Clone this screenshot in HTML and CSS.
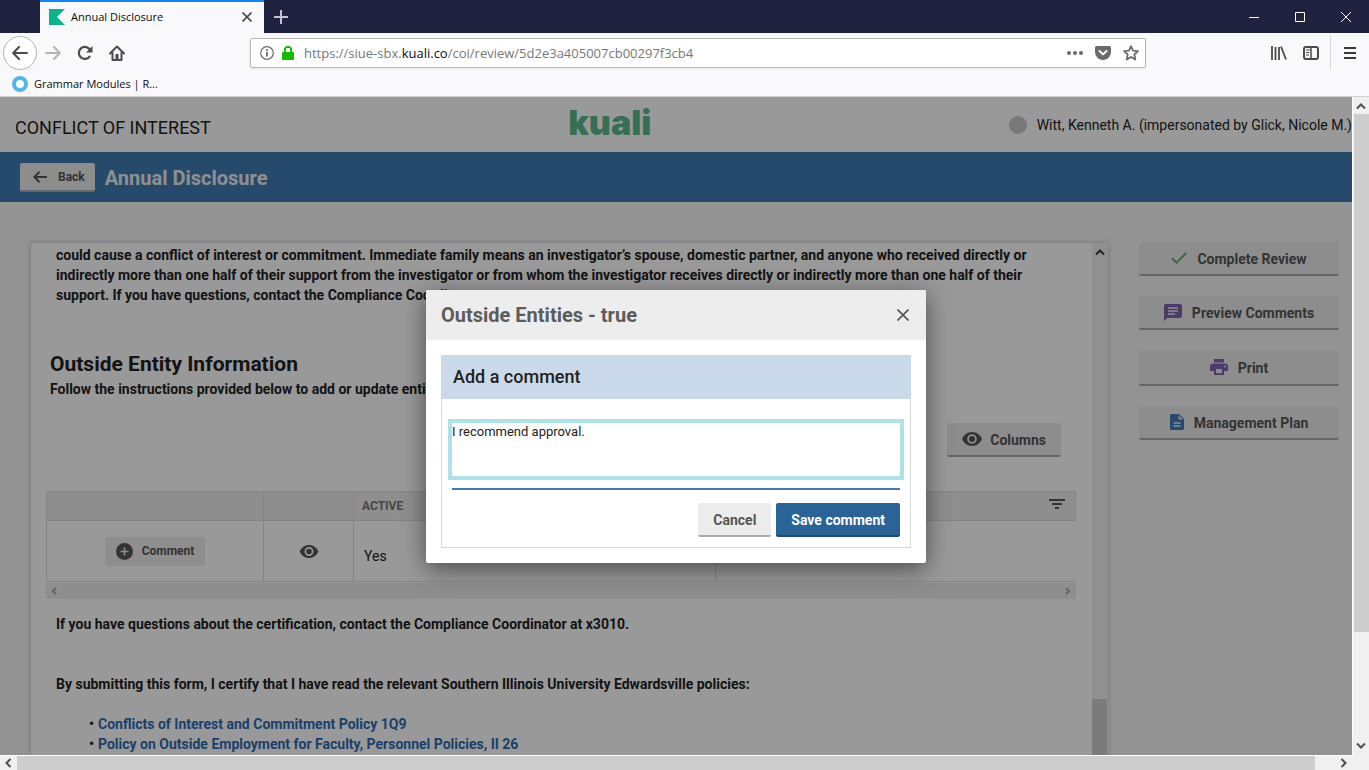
FILE: index.html
```html
<!DOCTYPE html>
<html lang="en">
<head>
<meta charset="utf-8">
<title>Annual Disclosure</title>
<link rel="stylesheet" href="styles.css">
</head>
<body>
<div class="tabbar">
  <div class="tab">
    <svg class="favicon" width="16" height="16" viewBox="0 0 16 16"><path d="M0 0h16l-8 8 8 8H0z" fill="#0db48a"/></svg>
    <span class="tab-title">Annual Disclosure</span>
    <button class="bare" aria-label="Close tab"><svg width="10" height="10" viewBox="0 0 10 10"><path d="M0.5 0.5l9 9M9.500.5l-9 9" stroke="#4a4a4f" stroke-width="1.600"/></svg></button>
  </div>
  <button class="bare new-tab" aria-label="New tab"><svg width="14" height="14" viewBox="0 0 14 14"><path d="M7 0v14M0 7h14" stroke="#c3c4cf" stroke-width="2"/></svg></button>
  <div class="window-buttons">
    <button class="bare" aria-label="Minimize"><svg width="10" height="10"><path d="M0 5.500h10" stroke="#fff"/></svg></button>
    <button class="bare" aria-label="Maximize"><svg width="10" height="10"><path d="M.5.5h9v9h-9z" fill="none" stroke="#fff"/></svg></button>
    <button class="bare" aria-label="Close"><svg width="10" height="10"><path d="M0 0l10 10M10 0L0 10" stroke="#fff"/></svg></button>
  </div>
</div>
<div class="toolbar">
  <div class="nav">
    <button class="bare back-circle" aria-label="Go back"><svg width="16" height="14" viewBox="0 0 16 14"><path d="M15 7H1.500M7 1L1.200 7 7 13" fill="none" stroke="#4a4a4f" stroke-width="2" stroke-linecap="round" stroke-linejoin="round"/></svg></button>
    <button class="bare" aria-label="Go forward"><svg width="16" height="14" viewBox="0 0 16 14"><path d="M1 7h13.500M9 1l5.800 6L9 13" fill="none" stroke="#b4b4b8" stroke-width="2" stroke-linecap="round" stroke-linejoin="round"/></svg></button>
    <button class="bare" aria-label="Reload"><svg width="16" height="16" viewBox="0 0 16 16"><path d="M12.600 11.600A6 6 0 1 1 12.400 4" fill="none" stroke="#4a4a4f" stroke-width="2.200" stroke-linecap="round"/><path d="M15.500 1v6.500H9z" fill="#4a4a4f"/></svg></button>
    <button class="bare" aria-label="Home"><svg width="16" height="16" viewBox="0 0 16 16"><path d="M1 8.500L8 1.500l7 7M3.500 8v7h9V8" fill="none" stroke="#4a4a4f" stroke-width="2" stroke-linecap="round" stroke-linejoin="round"/><path d="M6.500 9h3v6h-3z" fill="#4a4a4f"/></svg></button>
  </div>
  <div class="urlbar">
    <svg width="14" height="14" viewBox="0 0 14 14"><circle cx="7" cy="7" r="6.300" fill="none" stroke="#6a6a6e" stroke-width="1.200"/><path d="M7 6v4.500M7 3.200v1.700" stroke="#6a6a6e" stroke-width="1.800"/></svg>
    <svg width="12" height="14" viewBox="0 0 12 14"><rect y="6" width="12" height="8" rx="1" fill="#12bc00"/><path d="M2.800 7V4a3.200 3.200 0 0 1 6.400 0v3" fill="none" stroke="#12bc00" stroke-width="2"/></svg>
    <div class="url">https://siue-sbx.<b>kuali.co</b>/coi/review/5d2e3a405007cb00297f3cb4</div>
    <svg width="16" height="4"><g fill="#6a6a6e"><circle cx="2" cy="2" r="2"/><circle cx="8" cy="2" r="2"/><circle cx="14" cy="2" r="2"/></g></svg>
    <svg width="16" height="14" viewBox="0 0 16 14"><path d="M1.500 0h13A1.500 1.500 0 0 1 16 1.500V6a8 8 0 0 1-16 0V1.500A1.500 1.500 0 0 1 1.500 0z" fill="#6a6a6e"/><path d="M4.500 5L8 8.400 11.500 5" fill="none" stroke="#fff" stroke-width="2" stroke-linecap="round" stroke-linejoin="round"/></svg>
    <svg width="16" height="16" viewBox="0 0 16 16"><path d="M8 1.200l2 4.500 5 .5-3.700 3.300 1 5L8 12l-4.300 2.500 1-5L1 6.200l5-.5z" fill="none" stroke="#6a6a6e" stroke-width="1.800" stroke-linejoin="round"/></svg>
  </div>
  <div class="tools">
    <button class="bare" aria-label="Library"><svg width="16" height="14" viewBox="0 0 16 14"><path d="M1 0v14M4.500 1v13M8 1v13M10 .5L15 13.500" fill="none" stroke="#4a4a4f" stroke-width="1.800"/></svg></button>
    <button class="bare" aria-label="Sidebars"><svg width="16" height="14" viewBox="0 0 16 14"><rect x="1" y="1" width="14" height="12" rx="2" fill="none" stroke="#4a4a4f" stroke-width="2"/><path d="M8 1v12" stroke="#4a4a4f" stroke-width="1.500"/><path d="M3 4h4M3 6.500h3M3 9h3" stroke="#4a4a4f"/></svg></button>
    <button class="bare menu" aria-label="Open menu"><svg width="12" height="12"><path d="M0 1h12M0 6h12M0 11h12" stroke="#38383d" stroke-width="2"/></svg></button>
  </div>
</div>
<div class="bookmarks">
  <svg width="16" height="16"><circle cx="8" cy="8" r="6" fill="#fff" stroke="#52b6ec" stroke-width="4"/></svg>
  <span>Grammar Modules | R...</span>
</div>

<div class="viewport">
  <div class="page">
    <header class="app-header">
      <div class="app-name">CONFLICT OF INTEREST</div>
      <div class="logo">kuali</div>
      <div class="user"><span class="avatar"></span>Witt, Kenneth A. (impersonated by Glick, Nicole M.)</div>
    </header>
    <div class="title-bar">
      <button class="btn back"><svg width="14" height="12" viewBox="0 0 14 12"><path d="M14 6H1.500M6.500 .8L1.300 6l5.200 5.200" fill="none" stroke="#555" stroke-width="2"/></svg>Back</button>
      <h1>Annual Disclosure</h1>
    </div>
    <div class="columns">
      <main class="panel">
        <div class="panel-content">
          <p class="indent">could cause a conflict of interest or commitment. Immediate family means an investigator’s spouse, domestic partner, and anyone who received directly or<br>indirectly more than one half of their support from the investigator or from whom the investigator receives directly or indirectly more than one half of their<br>support. If you have questions, contact the Compliance Coordinator.</p>
          <section class="entity">
            <h2>Outside Entity Information</h2>
            <p>Follow the instructions provided below to add or update entities.</p>
          </section>
          <div class="table-tools">
            <button class="btn"><svg width="20" height="14" viewBox="0 0 20 14"><path d="M10 0C5.500 0 1.700 2.800 0 7c1.700 4.200 5.500 7 10 7s8.300-2.800 10-7c-1.700-4.200-5.500-7-10-7z" fill="#555"/><circle cx="10" cy="7" r="3.900" fill="none" stroke="#ececec" stroke-width="1.800"/></svg>Columns</button>
          </div>
          <table class="grid">
            <colgroup><col class="c1"><col class="c2"><col class="c3"><col class="c4"></colgroup>
            <thead><tr><th></th><th></th><th>ACTIVE</th><th class="last"><svg width="16" height="10"><path d="M0 1h16M3 5h10M6 9h4" stroke="#555" stroke-width="2"/></svg></th></tr></thead>
            <tbody><tr>
              <td class="center"><button class="comment"><svg width="17" height="17" viewBox="0 0 17 17"><circle cx="8.500" cy="8.500" r="8.500" fill="#555"/><path d="M8.500 4.500v8M4.500 8.500h8" stroke="#eee" stroke-width="1.700"/></svg>Comment</button></td>
              <td class="center"><button class="bare" aria-label="View"><svg width="20" height="13" viewBox="0 0 20 14"><path d="M10 0C5.500 0 1.700 2.800 0 7c1.700 4.200 5.500 7 10 7s8.300-2.800 10-7c-1.700-4.200-5.500-7-10-7z" fill="#555"/><circle cx="10" cy="7" r="3.900" fill="none" stroke="#fff" stroke-width="1.800"/></svg></button></td>
              <td class="value">Yes</td><td></td>
            </tr></tbody>
          </table>
          <div class="table-scroll"><svg width="6" height="8"><path d="M5 1L2 4l3 3" fill="none" stroke="#a8a8a8" stroke-width="2"/></svg><svg width="6" height="8"><path d="M1 1l3 3-3 3" fill="none" stroke="#a8a8a8" stroke-width="2"/></svg></div>
          <p class="indent">If you have questions about the certification, contact the Compliance Coordinator at x3010.</p>
          <p class="indent certify">By submitting this form, I certify that I have read the relevant Southern Illinois University Edwardsville policies:</p>
          <ul class="policies">
            <li><a href="#">Conflicts of Interest and Commitment Policy 1Q9</a></li>
            <li><a href="#">Policy on Outside Employment for Faculty, Personnel Policies, II 26</a></li>
          </ul>
        </div>
        <div class="panel-scroll"><svg width="10" height="8"><path d="M1 6.500l4-4 4 4" fill="none" stroke="#444" stroke-width="2.200"/></svg><div class="panel-thumb"></div></div>
      </main>
      <aside class="actions">
        <button class="btn"><svg width="16" height="12" viewBox="0 0 16 12"><path d="M.8 6l4.700 4.700L15.200 1" fill="none" stroke="#67b165" stroke-width="2"/></svg>Complete Review</button>
        <button class="btn"><svg width="18" height="17" viewBox="0 0 18 17"><path d="M2 0h14a2 2 0 0 1 2 2v10a2 2 0 0 1-2 2H3.500L0 17V2a2 2 0 0 1 2-2z" fill="#7e62b3"/><path d="M4 4h10M4 7h10M4 10h7" stroke="#ececec" stroke-width="1.500"/></svg>Preview Comments</button>
        <button class="btn print"><svg width="18" height="16" viewBox="0 0 18 16"><path d="M4 0h10v3.500H4zM3 4.500h12a3 3 0 0 1 3 3V12h-4v4H4v-4H0V7.500a3 3 0 0 1 3-3z" fill="#7e62b3"/><path d="M6 10h6v4.200H6z" fill="#ececec"/><circle cx="15" cy="7.500" r="1" fill="#ececec"/></svg>Print</button>
        <button class="btn"><svg width="14" height="16" viewBox="0 0 14 16"><path d="M1.500 0H9l5 5v9.500a1.500 1.500 0 0 1-1.500 1.500h-11A1.500 1.500 0 0 1 0 14.500v-13A1.500 1.500 0 0 1 1.500 0z" fill="#3f7cb6"/><path d="M8.500 1.200v4.300H13z" fill="#ececec"/><path d="M3.500 9h7M3.500 12h7" stroke="#ececec" stroke-width="1.600"/></svg>Management Plan</button>
      </aside>
    </div>

    <div class="overlay">
      <div class="modal" role="dialog" aria-labelledby="modal-title">
        <div class="modal-header">
          <h2 id="modal-title">Outside Entities - true</h2>
          <button class="bare" aria-label="Close dialog"><svg width="12" height="12"><path d="M.5.5l11 11M11.500.5l-11 11" stroke="#555" stroke-width="1.700"/></svg></button>
        </div>
        <div class="modal-body">
          <form class="card">
            <label class="card-title" for="comment">Add a comment</label>
            <div class="card-body">
              <textarea id="comment">I recommend approval.</textarea>
              <div class="underline"></div>
              <div class="form-buttons">
                <button type="button" class="btn cancel">Cancel</button>
                <button type="button" class="btn save">Save comment</button>
              </div>
            </div>
          </form>
        </div>
      </div>
    </div>
  </div>
  <div class="vscroll">
    <svg width="10" height="8"><path d="M1 6.500l4-4 4 4" fill="none" stroke="#505050" stroke-width="2"/></svg>
    <div class="vthumb"></div>
    <svg class="end" width="10" height="8"><path d="M1 1.500l4 4 4-4" fill="none" stroke="#505050" stroke-width="2"/></svg>
  </div>
  <div class="hscroll">
    <svg width="8" height="10"><path d="M6.500 1l-4 4 4 4" fill="none" stroke="#505050" stroke-width="2"/></svg>
    <div class="hthumb"></div>
    <svg width="8" height="10"><path d="M1.500 1l4 4-4 4" fill="none" stroke="#505050" stroke-width="2"/></svg>
  </div>
  <div class="corner"></div>
</div>
</body>
</html>
```
FILE: styles.css
```css
* { box-sizing: border-box; }
body {
  margin: 0;
  height: 100vh;
  display: flex;
  flex-direction: column;
  overflow: hidden;
  font-family: Roboto, "Liberation Sans", sans-serif;
  font-size: 14px;
  color: #222;
  background: #f9f9fb;
}
svg { display: block; flex: none; }
button { font-family: inherit; }
h1, h2, p, ul { margin: 0; }
.bare {
  border: 0;
  padding: 0;
  background: none;
  display: flex;
  align-items: center;
  justify-content: center;
}

/* Browser chrome */
.tabbar, .urlbar, .bookmarks { font-family: "Open Sans", "Noto Sans", sans-serif; }
.tabbar {
  flex: none;
  height: 33px;
  padding-left: 40px;
  display: flex;
  align-items: stretch;
  background: #202340;
}
.tab {
  width: 224px;
  padding: 0 12px 2px 9px;
  display: flex;
  align-items: center;
  gap: 6px;
  border-top: 2px solid #0a84ff;
  background: #f9f9fb;
  font-size: 11px;
  color: #0c0c0d;
}
.tab-title { flex: 1; }
.new-tab { width: 34px; }
.window-buttons { margin-left: auto; display: flex; }
.window-buttons .bare { width: 46px; }
.toolbar {
  flex: none;
  height: 40px;
  display: flex;
  align-items: center;
  justify-content: space-between;
}
.nav { width: 250px; padding-left: 3px; display: flex; align-items: center; }
.nav .bare { width: 32px; height: 32px; }
.nav .back-circle {
  width: 34px;
  height: 34px;
  border: 1px solid #b4b4b8;
  border-radius: 50%;
  background: #fff;
}
.urlbar {
  flex: 1;
  height: 30px;
  padding: 0 6px 0 9px;
  display: flex;
  align-items: center;
  gap: 8px;
  border: 1px solid #b8b8bc;
  border-radius: 2px;
  background: #fff;
  box-shadow: 0 1px 3px #0001;
}
.url { flex: 1; padding-left: 2px; font-size: 13px; color: #777; }
.url + svg, .url + svg + svg { margin-right: 4px; }
.url b { font-weight: 400; color: #0c0c0d; }
.tools {
  width: 223px;
  display: flex;
  align-self: stretch;
  align-items: center;
  justify-content: flex-end;
}
.tools .bare { width: 32px; }
.tools .menu { width: 39px; height: 34px; margin-left: 3px; border-left: 1px solid #d7d7db; }
.bookmarks {
  flex: none;
  height: 24px;
  padding: 0 0 2px 12px;
  display: flex;
  align-items: center;
  gap: 6px;
  border-bottom: 1px solid #d0d0d3;
  font-size: 11px;
  color: #0c0c0d;
}

/* Scrolling viewport */
.viewport {
  flex: 1;
  min-height: 0;
  display: grid;
  grid-template: minmax(0, 1fr) 15px / minmax(0, 1fr) 17px;
}
.vscroll {
  display: flex;
  flex-direction: column;
  align-items: center;
  gap: 4px;
  padding: 5px 0;
  background: #f0f0f0;
  border-left: 1px solid #fff;
}
.vthumb { width: 15px; height: 80%; background: #cdcdcd; }
.vscroll .end { margin-top: auto; }
.hscroll {
  display: flex;
  align-items: center;
  gap: 5px;
  padding: 0 4px;
  background: #f0f0f0;
  border-top: 1px solid #fff;
}
.hthumb { flex: 1; height: 14px; margin-right: 20px; background: #cdcdcd; }
.corner { background: #f0f0f0; }

/* Application page */
.page {
  position: relative;
  overflow: hidden;
  display: flex;
  flex-direction: column;
  background: #f5f5f7;
}
.app-header {
  flex: none;
  height: 55px;
  padding-left: 15px;
  display: flex;
  align-items: center;
  justify-content: space-between;
  background: #fff;
}
.app-name { padding-top: 6px; font-size: 18px; white-space: nowrap; }
.logo {
  padding-bottom: 4px;
  font-family: Inter, sans-serif;
  font-weight: 900;
  font-size: 34px;
  line-height: 40px;
  color: #58b98f;
}
.user {
  display: flex;
  align-items: center;
  justify-content: flex-end;
  gap: 10px;
  font-size: 14px;
  white-space: nowrap;
}
.avatar { width: 18px; height: 18px; border-radius: 50%; background: #c8c8c8; }
.title-bar {
  flex: none;
  height: 50px;
  padding-left: 20px;
  display: flex;
  align-items: center;
  gap: 10px;
  background: #3f7cb2;
}
h1 { padding-top: 2px; font-size: 20px; font-weight: 700; color: #eee; }
.btn {
  min-height: 34px;
  padding: 2px 15px 0;
  display: flex;
  align-items: center;
  justify-content: center;
  gap: 8px;
  border: 0;
  border-bottom: 2px solid #ababab;
  border-radius: 2px;
  background: #ececec;
  color: #555;
  font-size: 14px;
  font-weight: 700;
}
.btn svg { margin-bottom: 2px; }
.btn.back { min-height: 29px; padding: 1px 10px 0 13px; gap: 11px; font-size: 12px; }
.btn.back svg { margin-bottom: 0; }
.columns {
  flex: 1;
  min-height: 0;
  padding: 40px 13px 0 30px;
  display: flex;
  gap: 30px;
}
.panel {
  flex: 1;
  min-width: 0;
  display: flex;
  border: 1px solid #dcdcdc;
  border-bottom: 0;
  border-radius: 3px 3px 0 0;
  background: #fff;
  box-shadow: 0 0 5px #0002;
}
.panel-content {
  flex: 1;
  min-width: 0;
  padding: 2px 16px 0 15px;
  overflow: hidden;
  line-height: 20px;
  font-weight: 700;
}
.indent { padding-left: 10px; white-space: nowrap; }
.entity { padding: 45px 0 0 4px; }
.entity h2 { font-size: 21px; line-height: 29px; font-weight: 700; }
.table-tools { padding: 24px 15px 34px 0; display: flex; justify-content: flex-end; }
.grid {
  width: 100%;
  table-layout: fixed;
  border-collapse: collapse;
  font-weight: 400;
}
.c1 { width: 217px; }
.c2 { width: 90px; }
.c3 { width: 362px; }
.grid th {
  height: 29px;
  padding: 0 8px;
  border: 1px solid #dcdcdc;
  background: #ededed;
  color: #777;
  font-size: 12px;
  font-weight: 700;
  text-align: left;
}
.grid .last svg { margin: 0 2px 5px auto; }
.grid td {
  height: 61px;
  padding: 10px;
  border: 1px solid #dcdcdc;
  border-right-width: 0;
}
.grid .value { padding-top: 20px; }
.center > button { margin: 0 auto; }
.comment {
  width: 100px;
  height: 29px;
  padding: 0;
  display: flex;
  align-items: center;
  justify-content: center;
  gap: 9px;
  border: 0;
  border-radius: 2px;
  background: #ededed;
  color: #555;
  font-size: 12px;
  font-weight: 700;
}
.table-scroll {
  height: 16px;
  margin: 1px 0 15px;
  padding: 0 5px;
  display: flex;
  align-items: center;
  justify-content: space-between;
  background: #ededed;
}
.certify { margin-top: 40px; }
.policies { margin-top: 20px; padding: 0; list-style: none; }
.policies li { padding-left: 43px; }
.policies li::before { content: "•"; margin-right: 4px; }
a { color: #2c6cb5; text-decoration: none; }
.panel-scroll {
  width: 16px;
  padding-top: 5px;
  display: flex;
  flex-direction: column;
  align-items: center;
  background: #f0f0f0;
}
.panel-thumb { width: 15px; height: 11%; margin: auto 1px 0 0; background: #cdcdcd; }
.actions { width: 200px; display: flex; flex-direction: column; gap: 20px; }
.actions .btn { gap: 10px; }
.actions .print { min-height: 36px; }

/* Dialog */
.overlay {
  position: absolute;
  inset: 0;
  display: flex;
  align-items: center;
  justify-content: center;
  background: rgba(0, 0, 0, 0.4);
}
.modal {
  width: 500px;
  border-radius: 2px;
  overflow: hidden;
  background: #fff;
  box-shadow: 0 6px 24px rgba(0, 0, 0, 0.5);
}
.modal-header {
  height: 50px;
  padding: 0 17px 0 15px;
  display: flex;
  align-items: center;
  justify-content: space-between;
  background: #ededed;
}
.modal-header h2 { font-size: 20px; font-weight: 700; color: #5c5c5c; }
.modal-body { padding: 15px; }
.card { border: 1px solid #d8d8d8; border-top: 0; }
.card-title {
  height: 44px;
  margin: 0 -1px;
  padding-left: 12px;
  display: flex;
  align-items: center;
  background: #cbdaea;
  color: #222;
  font-size: 18px;
  font-weight: 500;
}
.card-body { padding: 24px 10px 10px; }
textarea {
  display: block;
  width: 100%;
  height: 53px;
  padding: 0;
  border: 0;
  outline: 4px solid #ade2ea;
  resize: none;
  overflow: hidden;
  font: 13px/18px Roboto, sans-serif;
  color: #222;
}
.underline { height: 2px; margin: 12px 0 13px; background: #3f7cad; }
.form-buttons { display: flex; justify-content: flex-end; gap: 5px; }
.save { background: #2a6496; border-color: #1f4b70; color: #fff; }
```
